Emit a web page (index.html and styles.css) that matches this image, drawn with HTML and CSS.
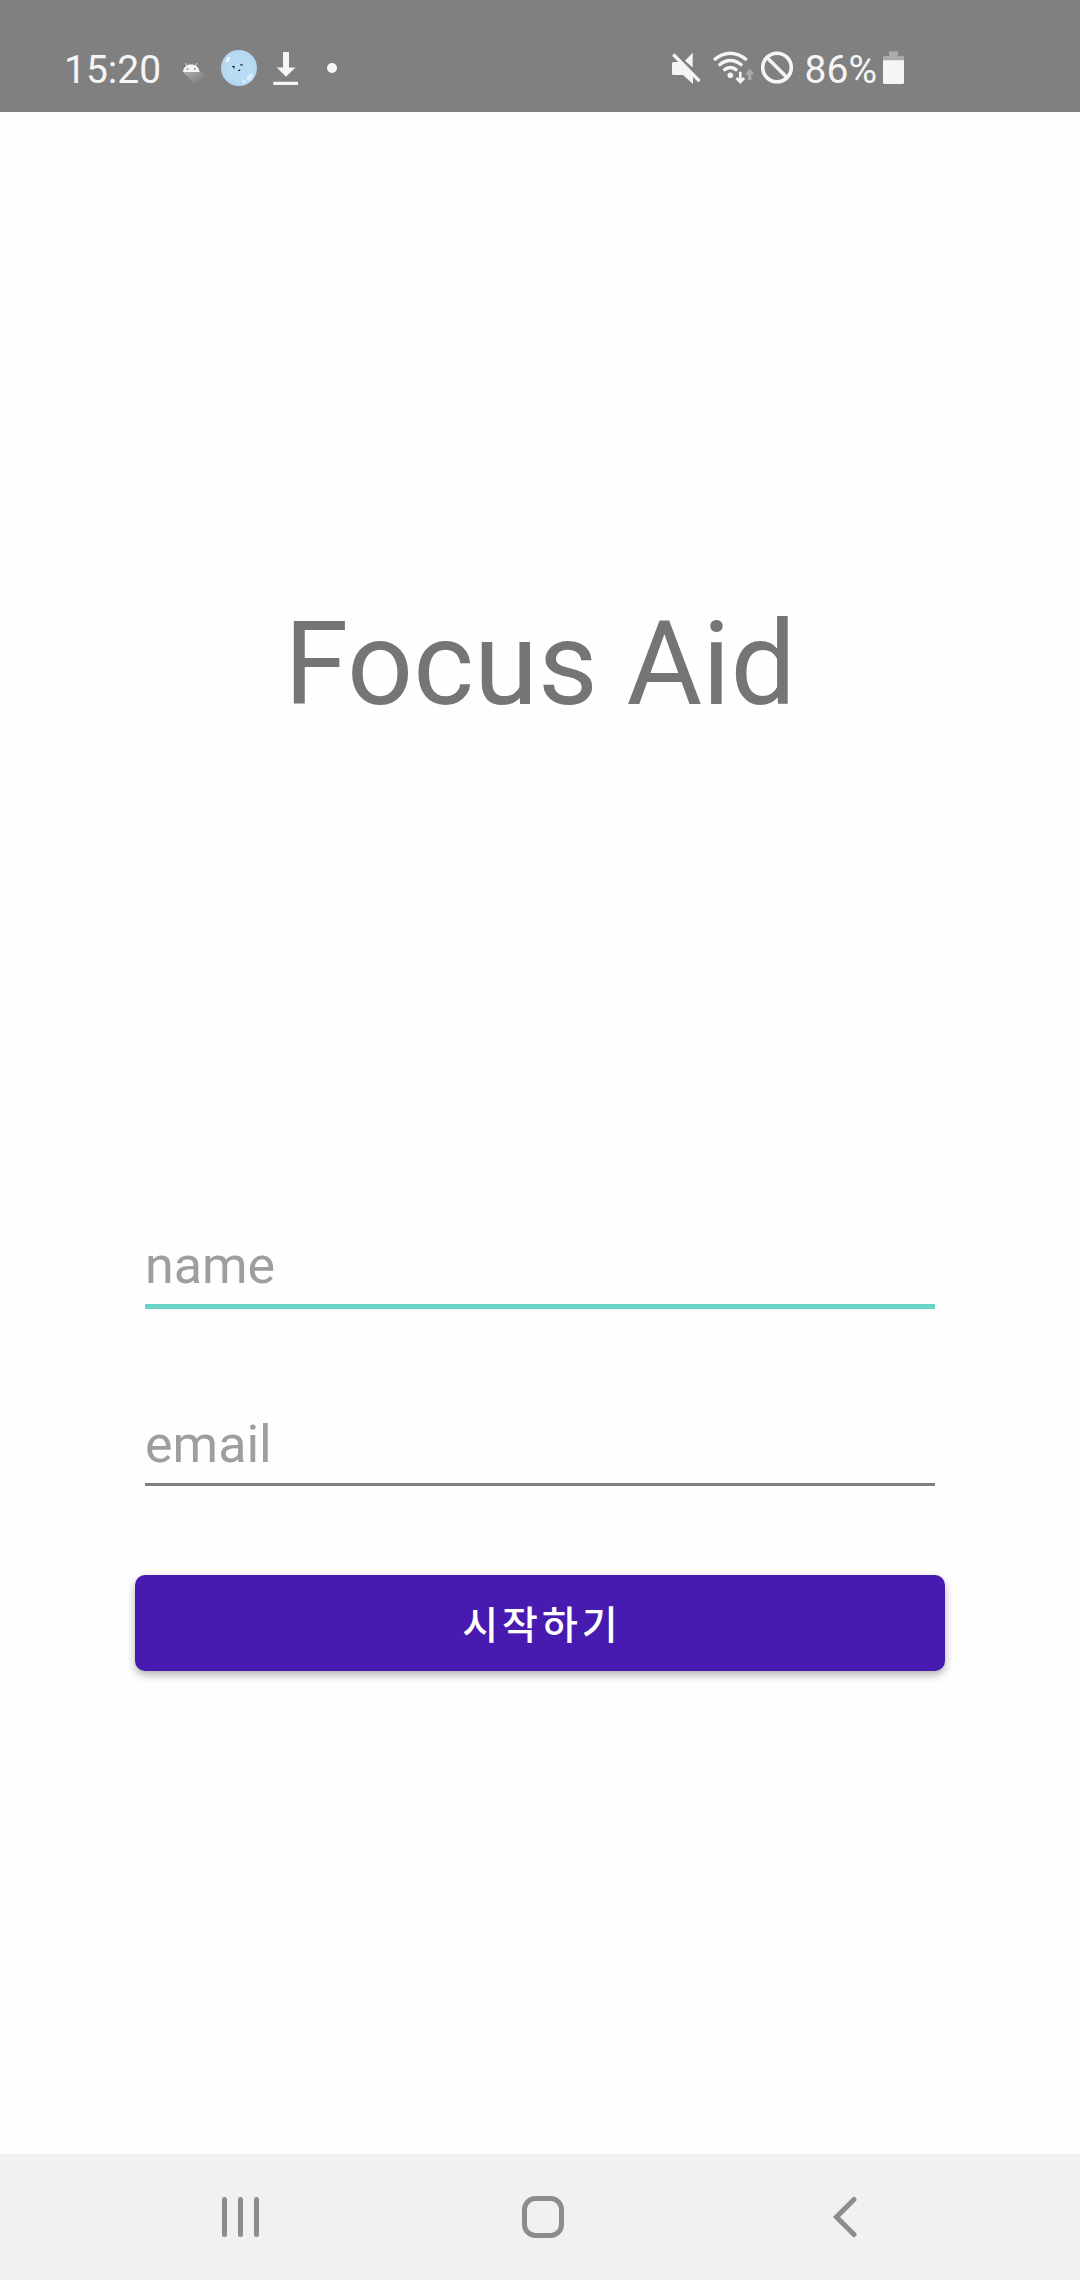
FILE: index.html
```html
<!DOCTYPE html>
<html lang="ko">
<head>
<meta charset="utf-8">
<meta name="viewport" content="width=device-width, initial-scale=1">
<title>Focus Aid</title>
<link rel="stylesheet" href="styles.css">
</head>
<body>
<header class="status">
  <div class="status-left">
    <span class="status-text">15:20</span>
    <svg width="28" height="36" viewBox="4 0 28 36" aria-hidden="true">
      <defs><linearGradient id="shade" x1="0" y1="0" x2="1" y2="1"><stop offset="0" stop-color="#b4b4b4"/><stop offset="0.800" stop-color="#808080"/></linearGradient></defs>
      <path d="M10 22L23 35L32 26L26 20Z" fill="url(#shade)"/>
      <path d="M10 22C10.500 17 13.500 14.500 18.200 14.500S26 17 26.500 22Z" fill="#f5f5f5"/>
      <path d="M14.500 16.500L12.500 13M22 16.500L24 13" stroke="#dedede" stroke-width="1"/>
      <circle cx="14.500" cy="19" r="1" fill="#999"/><circle cx="22" cy="19" r="1" fill="#999"/>
    </svg>
    <svg width="36" height="36" viewBox="0 0 36 36" aria-hidden="true">
      <defs><radialGradient id="bubble"><stop offset="0.500" stop-color="#badbf3"/><stop offset="1" stop-color="#b4d8f2"/></radialGradient></defs>
      <circle cx="18" cy="18" r="18" fill="url(#bubble)"/>
      <ellipse cx="7" cy="9.500" rx="1.500" ry="3" fill="#f4faff" transform="rotate(30 7 9.500)"/>
      <ellipse cx="29" cy="27" rx="2.300" ry="4.200" fill="#dceefb" transform="rotate(35 29 27)"/>
      <ellipse cx="23" cy="31.500" rx="2" ry="1.500" fill="#dceefb"/>
      <path d="M11 16.500h2v2M19 15h2v-1M17 20.500h1.500v-1" fill="none" stroke="#1c2830" stroke-width="1.200"/>
    </svg>
    <svg width="26" height="36" viewBox="0 0 26 36" aria-hidden="true">
      <path d="M10 2h6v15.500h6.500L13 26.700L3.800 17.500H10ZM.3 31.700h24.700v3.300H.3Z" fill="#f5f5f5"/>
    </svg>
    <svg width="34" height="36" viewBox="0 0 34 36" aria-hidden="true"><circle cx="17" cy="18" r="5" fill="#f5f5f5"/></svg>
  </div>
  <div class="status-right">
    <svg width="36" height="36" viewBox="0 0 36 36" aria-hidden="true">
      <path d="M4.500 12H11L24 25V34L14 25H4.500Q3 25 3 23.500V13.500Q3 12 4.500 12ZM23.700 2.700V17.500L16 10.700Z" fill="#f5f5f5"/>
      <path d="M4.300 4.500L30.500 31.200" stroke="#f5f5f5" stroke-width="3.300"/>
    </svg>
    <svg width="44" height="36" viewBox="0 0 44 36" aria-hidden="true">
      <g fill="none" stroke="#f5f5f5" stroke-width="3.200"><path d="M3 10Q19.300-3.500 35.800 10"/><path d="M7.700 15.500Q19.300 5.500 31.200 15.500"/><path d="M12.500 20.500Q19.300 14.500 26.200 20.500"/></g>
      <circle cx="19.300" cy="25.300" r="2.800" fill="#f5f5f5"/>
      <path d="M29.300 21.700V31M25.500 28L29.300 32L33.100 28" fill="none" stroke="#f5f5f5" stroke-width="2.700"/>
      <path d="M38.700 18.500L43.300 24.500H40.300V30H37.100V24.500H34.300Z" fill="#ababab"/>
    </svg>
    <svg width="38" height="36" viewBox="0 0 38 36" aria-hidden="true">
      <g fill="none" stroke="#f5f5f5" stroke-width="3.600"><circle cx="16" cy="17.500" r="14.300"/><path d="M6 7.500L26 27.500"/></g>
    </svg>
    <span class="status-text">86%</span>
    <svg width="21" height="36" viewBox="0 0 21 36" aria-hidden="true">
      <path d="M6 1.300h9V6h4.500Q21 6 21 7.500V12H0V7.500Q0 6 1.500 6H6Z" fill="#ababab"/>
      <path d="M0 10.300H21V32.500Q21 34 19.500 34H1.500Q0 34 0 32.500Z" fill="#f5f5f5"/>
    </svg>
  </div>
</header>
<main class="screen">
  <h1 class="title">Focus Aid</h1>
  <form class="form">
    <input class="field field-active" type="text" name="name" placeholder="name" aria-label="name">
    <input class="field" type="email" name="email" placeholder="email" aria-label="email">
    <button class="start" type="button">시작하기</button>
  </form>
</main>
<nav class="navbar" aria-label="System">
  <button class="nav-button" type="button" aria-label="Recent apps">
    <svg width="42" height="42" viewBox="0 0 42 42"><path d="M4.500 3.500V38.500M20.500 3.500V38.500M36.500 3.500V38.500"/></svg>
  </button>
  <button class="nav-button" type="button" aria-label="Home">
    <svg width="42" height="42" viewBox="0 0 42 42"><rect x="2.500" y="2.500" width="37" height="37" rx="11"/></svg>
  </button>
  <button class="nav-button" type="button" aria-label="Back">
    <svg width="42" height="42" viewBox="0 0 42 42"><path d="M30 3.500L12.500 21L30 38.500"/></svg>
  </button>
</nav>
</body>
</html>
```
FILE: styles.css
```css
* {
  box-sizing: border-box;
}

body {
  margin: 0;
  min-height: 100vh;
  display: flex;
  flex-direction: column;
  background: #fefefe;
  font-family: Roboto, "Noto Sans CJK KR", sans-serif;
}

svg {
  display: block;
  flex: none;
}

.status {
  display: flex;
  justify-content: space-between;
  align-items: center;
  height: 112px;
  padding: 24px 176px 0 64px;
  background: #808080;
}

.status-left,
.status-right {
  display: flex;
  align-items: center;
}

.status-left {
  gap: 16px;
}

.status-right {
  gap: 6px;
}

.status-text {
  padding-top: 4px;
  color: #f5f5f5;
  font-size: 39px;
  line-height: 44px;
}

.screen {
  flex: 1;
  display: flex;
  flex-direction: column;
  align-items: center;
  padding-top: 484px;
}

.title {
  margin: 0;
  color: #757575;
  font-size: 116px;
  font-weight: 400;
  line-height: 136px;
}

.form {
  width: 75%;
  margin-top: 487px;
  display: flex;
  flex-direction: column;
}

.field {
  height: 88px;
  margin: 0 10px 89px;
  padding: 8px 0 0;
  border: 0;
  border-bottom: 3px solid #808080;
  border-radius: 0;
  outline: 0;
  background: transparent;
  color: #212121;
  font-family: inherit;
  font-size: 52px;
}

.field::placeholder {
  color: #9e9e9e;
  opacity: 1;
}

.field-active {
  height: 90px;
  border-bottom: 5px solid #66d5c5;
}

.start {
  height: 96px;
  padding: 0 0 2px 4px;
  border: 0;
  border-radius: 10px;
  background: #471bb0;
  box-shadow: 0 4px 8px rgba(0, 0, 0, 0.3);
  color: #fff;
  font-family: inherit;
  font-size: 39px;
  font-weight: 500;
  letter-spacing: 4px;
}

.navbar {
  display: grid;
  grid-template-columns: repeat(3, 1fr);
  height: 126px;
  padding: 0 84px 0 90px;
  background: #f1f1f1;
}

.nav-button {
  display: flex;
  justify-content: center;
  align-items: center;
  padding: 0;
  border: 0;
  background: none;
}

.nav-button svg {
  fill: none;
  stroke: #8c8c8c;
  stroke-width: 5;
  stroke-linecap: round;
}
```
